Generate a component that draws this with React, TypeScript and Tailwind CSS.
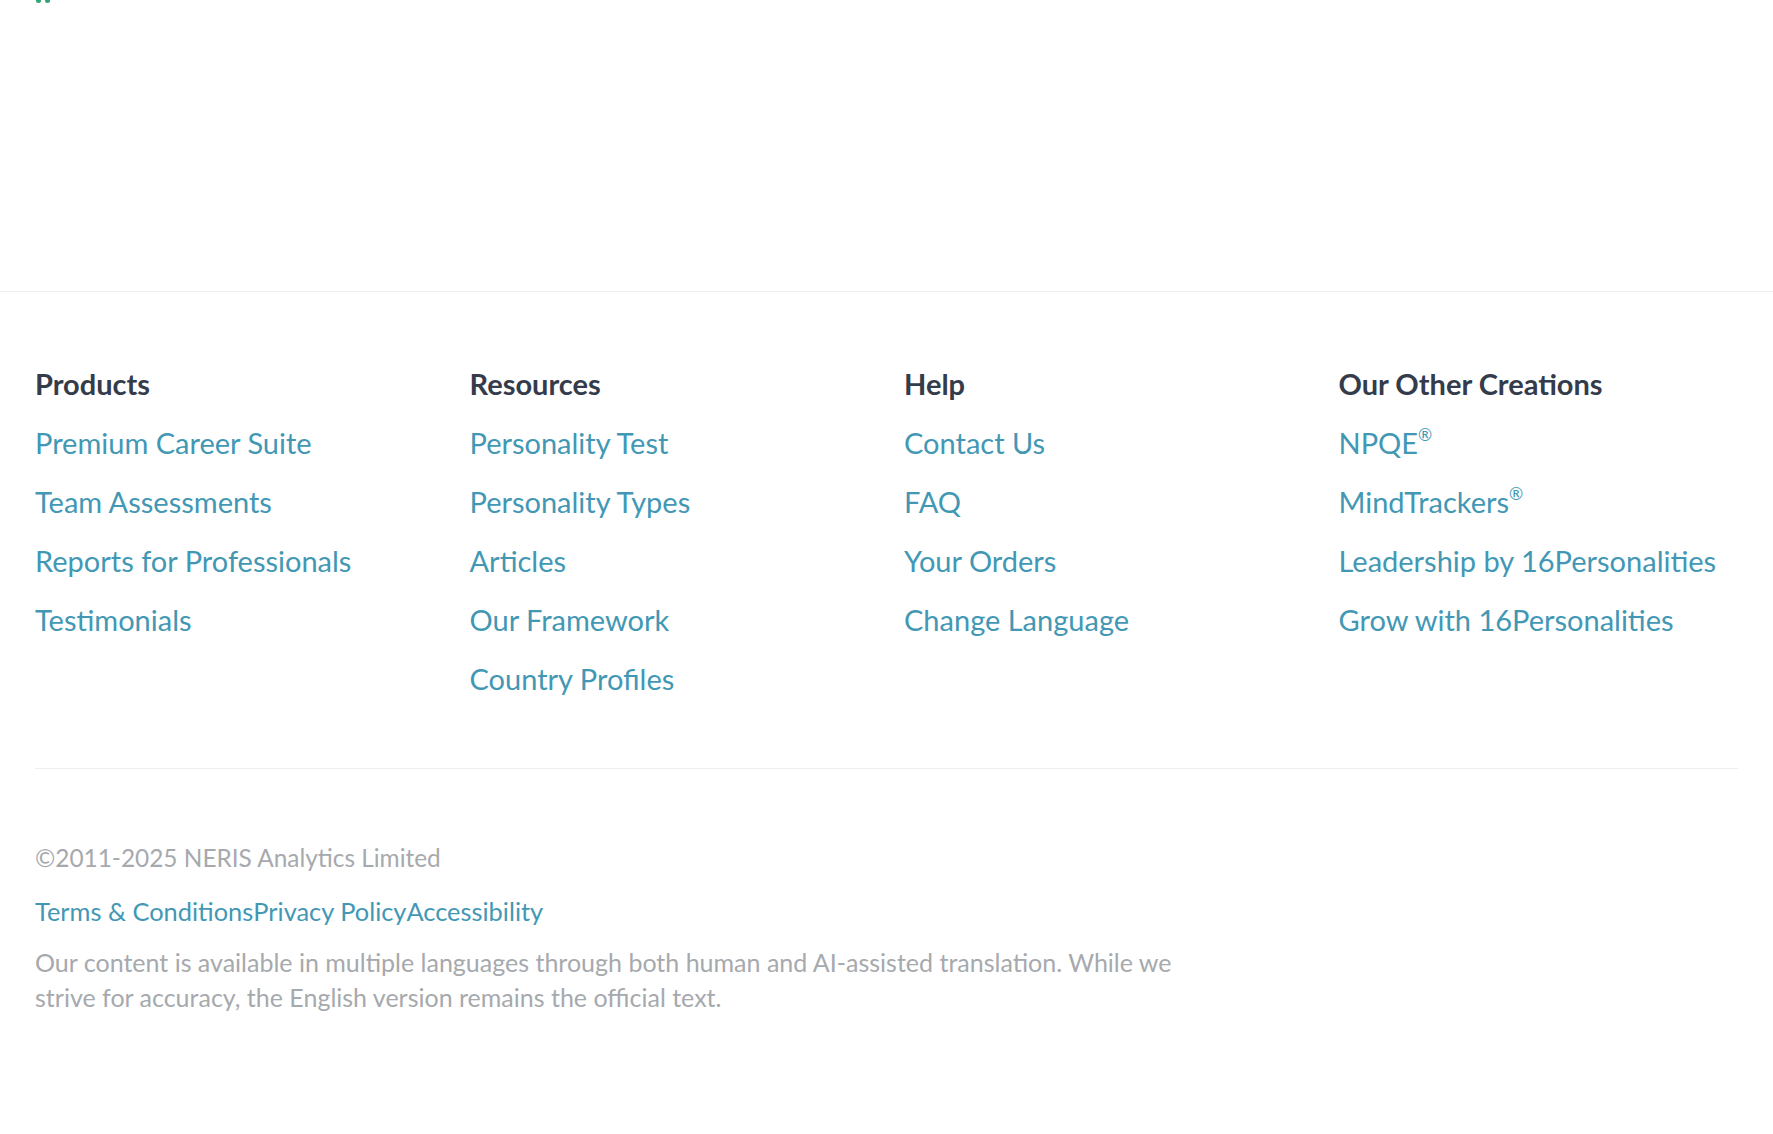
import React from "react";

const cols = [
  { title: "Products", links: ["Premium Career Suite", "Team Assessments", "Reports for Professionals", "Testimonials"] },
  { title: "Resources", links: ["Personality Test", "Personality Types", "Articles", "Our Framework", "Country Profiles"] },
  { title: "Help", links: ["Contact Us", "FAQ", "Your Orders", "Change Language"] },
  { title: "Our Other Creations", links: ["NPQE®", "MindTrackers®", "Leadership by 16Personalities", "Grow with 16Personalities"] },
];

function LinkText({ text }: { text: string }) {
  if (text.endsWith("®")) {
    return (
      <>
        {text.slice(0, -1)}
        <sup className="relative -top-[2px] text-[17px] align-super">®</sup>
      </>
    );
  }
  return <>{text}</>;
}

export default function App() {
  return (
    <div className="min-h-screen bg-white" style={{ fontFamily: "Lato, sans-serif" }}>
      <div className="h-[294px] border-b border-[#eeeeee]">
        <div className="flex gap-[4px] pl-[36px] -mt-[2px]">
          <span className="block h-[5px] w-[5px] rounded-full bg-[#33a474]" />
          <span className="block h-[5px] w-[5px] rounded-full bg-[#33a474]" />
        </div>
      </div>
      <footer className="px-[35px] pt-[62px]">
        <div className="grid grid-cols-4 gap-[35px]">
          {cols.map((c) => (
            <div key={c.title}>
              <div className="text-[29px] font-bold leading-[59px] text-[#343c4b]">{c.title}</div>
              {c.links.map((l) => (
                <a key={l} href="#" className="block text-[29px] leading-[59px] text-[#4298b4]">
                  <LinkText text={l} />
                </a>
              ))}
            </div>
          ))}
        </div>
        <div className="mt-[60px] border-t border-[#eeeeee]" />
        <div className="pt-[71px] text-[24.4px] leading-[36px] text-[#a6a9ad]">©2011-2025 NERIS Analytics Limited</div>
        <div className="mt-[17px] flex text-[25.4px] leading-[36px] text-[#4298b4]">
          <a href="#">Terms &amp; Conditions</a>
          <a href="#">Privacy Policy</a>
          <a href="#">Accessibility</a>
        </div>
        <p className="mt-[16px] max-w-[1170px] text-[25px] leading-[35px] text-[#a6a9ad]">
          Our content is available in multiple languages through both human and AI-assisted translation. While we strive for accuracy, the English version remains the official text.
        </p>
      </footer>
    </div>
  );
}
